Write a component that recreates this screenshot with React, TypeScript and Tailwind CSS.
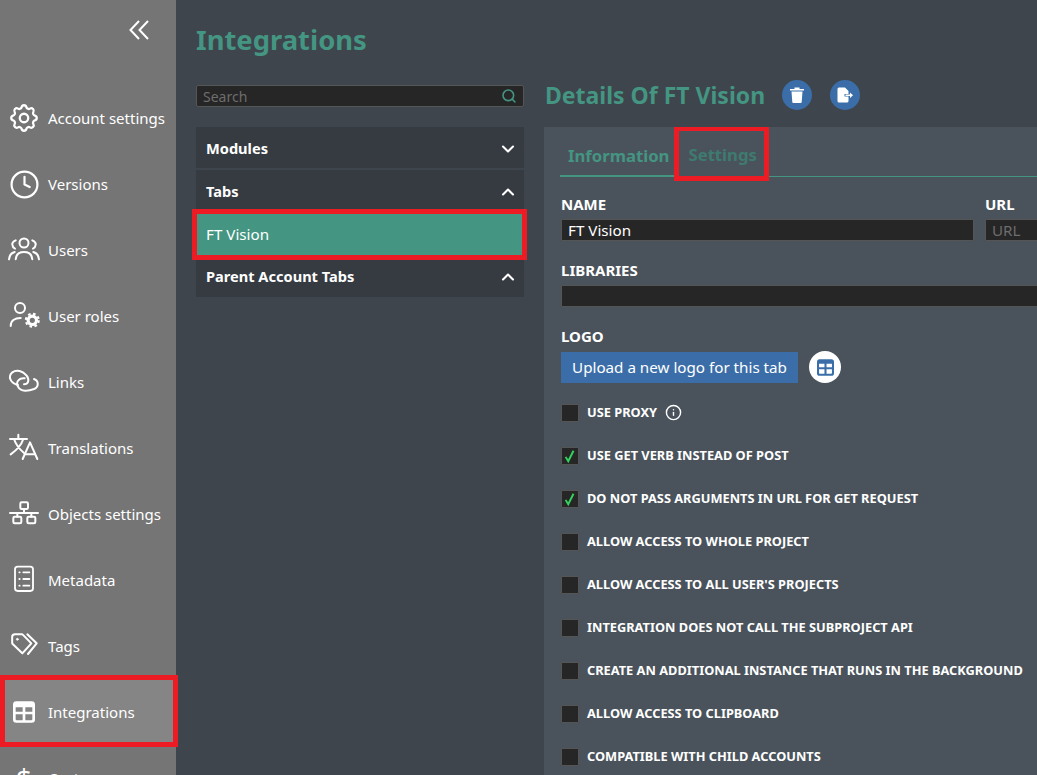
import React from 'react'
import { ChevronDown, ChevronUp, Clock, Info, Search } from 'lucide-react'
import { TbSettings } from 'react-icons/tb'

function Collapse() {
  return (
    <svg viewBox="0 0 20 20" className="w-5 h-5" fill="none" stroke="currentColor" strokeWidth="2">
      <path d="M10 1 1.500 10 10 19M19 1l-8.500 9 8.500 9" />
    </svg>
  )
}

function UsersIcon() {
  return (
    <svg viewBox="0 0 36 36" className="w-9 h-9" fill="none" stroke="currentColor" strokeWidth="2" strokeLinecap="round">
      <circle cx="18" cy="11" r="4.500" />
      <path d="M9.700 8.300C7 9.500 6 11 6.300 12.700 6.500 14.500 7.500 16 9 16.700M26.300 8.300C29 9.500 30 11 29.700 12.700 29.500 14.500 28.500 16 27 16.700" />
      <path d="M9.700 27.300C10 23 13 20 18 20s8 3 8.300 7.300M3 27.300C3.300 24 5 21 8.700 20M33 27.300C32.700 24 31 21 27.300 20" />
    </svg>
  )
}

function UserRolesIcon() {
  return (
    <svg viewBox="0 0 36 36" className="w-9 h-9" fill="none" stroke="currentColor" strokeWidth="2" strokeLinecap="round">
      <circle cx="14" cy="10" r="5" />
      <path d="M4.700 28c0-5 3.800-8 10-8" />
      <circle cx="26.300" cy="22.300" r="4.200" strokeWidth="3.200" />
      <circle cx="26.300" cy="22.300" r="6.500" strokeWidth="2" strokeLinecap="butt" strokeDasharray="2.600 2.500" />
    </svg>
  )
}

function LinksIcon() {
  return (
    <svg viewBox="6 -3 108 108" className="w-9 h-9" fill="none" stroke="currentColor" strokeWidth="6" strokeLinecap="round">
      <path d="M42 60C20 55 10 35 25 22 38 12 56 18 68 32 78 46 72 58 60 58" />
      <path d="M62 40C46 38 34 50 42 65 50 82 75 78 90 72 105 65 105 48 90 42" />
    </svg>
  )
}

function TranslationsIcon() {
  return (
    <svg viewBox="6 195 108 108" className="w-9 h-9" fill="none" stroke="currentColor" strokeWidth="6" strokeLinecap="round" strokeLinejoin="round">
      <path d="M18 222h51M43 209v13M30 222c6 18 18 32 30 42M58 222c-6 18-18 32-38 46" />
      <path d="M56 282 78 232l22 50M63 268h30" />
    </svg>
  )
}

function ObjectsIcon() {
  return (
    <svg viewBox="6 3 108 108" className="w-9 h-9" fill="none" stroke="currentColor" strokeWidth="6" strokeLinecap="round" strokeLinejoin="round">
      <rect x="49" y="22" width="23" height="20" rx="4" />
      <path d="M60 42v12M18 54h84M40 54v11M82 54v11" />
      <rect x="28" y="65" width="24" height="20" rx="4" />
      <rect x="70" y="65" width="24" height="20" rx="4" />
    </svg>
  )
}

function MetadataIcon() {
  return (
    <svg viewBox="6 201 108 108" className="w-9 h-9" fill="none" stroke="currentColor" strokeWidth="5.500" strokeLinecap="round">
      <rect x="33" y="215" width="54" height="73" rx="8" />
      <path d="M46 232h1M58 232h18M46 252h1M58 252h18M46 272h1M58 272h18" />
    </svg>
  )
}

function TagsIcon() {
  return (
    <svg viewBox="6 9 108 108" className="w-9 h-9" fill="none" stroke="currentColor" strokeWidth="6" strokeLinecap="round" strokeLinejoin="round">
      <path d="M33 28h20c2 0 3 .5 4 1.500l25 25.500-27 30-29-28c-1-1-1.500-2-1.500-4V36c0-5 3-8 8.500-8z" />
      <path d="M70 28l28 27-26 32" />
      <circle cx="40" cy="43" r="3" fill="currentColor" strokeWidth="2" />
    </svg>
  )
}

function GridIcon({ className }: { className: string }) {
  return (
    <svg viewBox="0 0 66 65" className={className} fill="currentColor" fillRule="evenodd">
      <path d="M10 0h46a10 10 0 0 1 10 10v45a10 10 0 0 1-10 10H10A10 10 0 0 1 0 55V10A10 10 0 0 1 10 0zM8 18v14h21V18zM37 18v14h21V18zM8 39v15a3 3 0 0 0 3 3h18V39zM37 39v18h18a3 3 0 0 0 3-3V39z" />
    </svg>
  )
}

function DollarIcon() {
  return <span className="text-[28px] leading-none font-normal">$</span>
}

const navItems = [
  { label: 'Account settings', icon: <TbSettings className="w-[34px] h-[34px]" strokeWidth={1.6} /> },
  { label: 'Versions', icon: <Clock className="w-[31px] h-[31px]" strokeWidth={1.7} /> },
  { label: 'Users', icon: <UsersIcon /> },
  { label: 'User roles', icon: <UserRolesIcon /> },
  { label: 'Links', icon: <LinksIcon /> },
  { label: 'Translations', icon: <TranslationsIcon /> },
  { label: 'Objects settings', icon: <ObjectsIcon /> },
  { label: 'Metadata', icon: <MetadataIcon /> },
  { label: 'Tags', icon: <TagsIcon /> },
  { label: 'Integrations', icon: <GridIcon className="w-[22px] h-[22px]" />, active: true },
  { label: 'Costs', icon: <DollarIcon /> },
]

const checks = [
  { label: 'USE PROXY', info: true },
  { label: 'USE GET VERB INSTEAD OF POST', checked: true },
  { label: 'DO NOT PASS ARGUMENTS IN URL FOR GET REQUEST', checked: true },
  { label: 'ALLOW ACCESS TO WHOLE PROJECT' },
  { label: "ALLOW ACCESS TO ALL USER'S PROJECTS" },
  { label: 'INTEGRATION DOES NOT CALL THE SUBPROJECT API' },
  { label: 'CREATE AN ADDITIONAL INSTANCE THAT RUNS IN THE BACKGROUND' },
  { label: 'ALLOW ACCESS TO CLIPBOARD' },
  { label: 'COMPATIBLE WITH CHILD ACCOUNTS' },
]

function Sidebar() {
  return (
    <aside className="w-[176px] shrink-0 bg-[#757575] text-white flex flex-col">
      <div className="h-[85px] shrink-0 flex justify-end items-start pt-[20px] pr-[27px]">
        <Collapse />
      </div>
      {navItems.map((item) => (
        <div key={item.label} className={`relative h-[66px] shrink-0 flex items-center ${item.active ? 'bg-[#858585]' : ''}`}>
          <div className="w-[48px] shrink-0 flex justify-center">{item.icon}</div>
          <span className="text-[15px] whitespace-nowrap">{item.label}</span>
          {item.active && <div className="absolute left-0 top-[-4px] w-[178px] h-[72px] border-[5px] border-[#ed1c24]" />}
        </div>
      ))}
    </aside>
  )
}

function AccordionHead({ title, open, className }: { title: string; open?: boolean; className: string }) {
  return (
    <div className={`flex items-center justify-between pl-[10px] pr-[6px] text-white ${className}`}>
      <span className="text-[14.600px] font-bold">{title}</span>
      {open ? <ChevronUp className="w-5 h-5" strokeWidth={2.5} /> : <ChevronDown className="w-5 h-5" strokeWidth={2.5} />}
    </div>
  )
}

function LeftColumn() {
  return (
    <div className="w-[328px] shrink-0">
      <div className="h-[22px] bg-[#262626] border border-[#555] rounded-[2px] flex items-center justify-between px-[6px]">
        <span className="text-[14px] text-[#6d6d6d]">Search</span>
        <Search className="w-[16px] h-[16px] text-[#449582]" strokeWidth={2.4} />
      </div>
      <div className="mt-[20px] flex flex-col">
        <div className="bg-[#363b42] mb-[2px]">
          <AccordionHead title="Modules" className="h-[41px] pt-[2px]" />
        </div>
        <div className="bg-[#363b42]">
          <AccordionHead title="Tabs" open className="h-[44px] pb-[1px]" />
          <div className="relative h-[41px] bg-[#449582] flex items-center pl-[10px] text-[15.200px] text-white">
            FT Vision
            <div className="absolute left-[-4px] top-[-5px] w-[335px] h-[51px] border-[5px] border-[#ed1c24]" />
          </div>
          <AccordionHead title="Parent Account Tabs" open className="h-[42px] pt-[2px]" />
        </div>
      </div>
    </div>
  )
}

function Field({ label, value, placeholder, className }: { label: string; value?: string; placeholder?: string; className?: string }) {
  return (
    <div className={className}>
      <div className="text-[15px] leading-[20px] font-bold text-white">{label}</div>
      <div className="mt-[5px] h-[22px] bg-[#262626] border border-[#555] rounded-[1px] px-[6px] flex items-center text-[15.200px] whitespace-nowrap">
        {value && <span className="text-white">{value}</span>}
        {placeholder && <span className="text-[#6d6d6d]">{placeholder}</span>}
      </div>
    </div>
  )
}

function CheckRow({ label, checked, info }: { label: string; checked?: boolean; info?: boolean }) {
  return (
    <div className="h-[43px] shrink-0 flex items-center">
      <div className="w-[18px] h-[18px] bg-[#262626] border border-[#555] rounded-[1px] flex items-center justify-center">
        {checked && (
          <svg viewBox="0 0 16 16" className="w-[14px] h-[14px] text-[#33d35e]" fill="none" stroke="currentColor" strokeWidth="2.200">
            <path d="M3 9l3 5 6-12" />
          </svg>
        )}
      </div>
      <span className="ml-[8px] pt-[1px] text-[12.800px] font-bold text-white whitespace-nowrap">{label}</span>
      {info && <Info className="ml-[8px] w-[17px] h-[17px] text-white" strokeWidth={2} />}
    </div>
  )
}

function DetailsPanel() {
  return (
    <div className="flex-1 min-w-0 mt-[-5px]">
      <div className="h-[30px] flex items-center">
        <h2 className="text-[23px] font-bold text-[#449582] whitespace-nowrap ml-[1px]">Details Of FT Vision</h2>
        <div className="ml-[17px] w-[30px] h-[30px] rounded-full bg-[#3b6ea8] flex items-center justify-center">
          <svg viewBox="0 0 16 16" className="w-4 h-4" fill="white">
            <path d="M5.500 0.500h5V2H15v1.500H1V2h4.500zM2.500 4.500h11l-.8 10.500a1 1 0 0 1-1 1H4.300a1 1 0 0 1-1-1z" />
          </svg>
        </div>
        <div className="ml-[18px] w-[30px] h-[30px] rounded-full bg-[#3b6ea8] flex items-center justify-center">
          <svg viewBox="0 0 16 16" className="w-4 h-4" fill="white">
            <path d="M2 .500h6l3.500 3.500v3H7.500v2.500h4V14a1.500 1.500 0 0 1-1.500 1.500H2A1.500 1.500 0 0 1 .5 14V2A1.500 1.500 0 0 1 2 .5z" />
            <path d="M8.500 7.500H13V5.500l3 2.800-3 2.800v-2H8.500z" />
          </svg>
        </div>
      </div>
      <div className="mt-[17px] bg-[#4a535c] h-[700px] pl-[17px] pt-[16px] overflow-hidden">
        <div className="relative flex items-end h-[34px] ml-[-1px] border-b border-[#449582]">
          <div className="h-[34px] px-[8px] border-b-[2px] border-[#449582] mb-[-1px] text-[16.700px] font-bold text-[#449582]">Information</div>
          <div className="h-[34px] pl-[11px] pr-[8px] text-[16.700px] font-bold text-[#3e7b6f]">Settings</div>
          <div className="absolute left-[114px] top-[-17px] w-[95px] h-[55px] border-[5px] border-[#ed1c24]" />
        </div>
        <div className="mt-[17px] flex gap-[11px]">
          <Field label="NAME" value="FT Vision" className="w-[413px] shrink-0" />
          <Field label="URL" placeholder="URL" className="w-[300px] shrink-0" />
        </div>
        <Field label="LIBRARIES" className="mt-[19px] w-[700px]" />
        <div className="mt-[19px] text-[15px] leading-[20px] font-bold text-white">LOGO</div>
        <div className="mt-[5px] flex items-center">
          <div className="w-[237px] h-[31px] bg-[#3b6ea8] flex items-center justify-center text-[15.200px] text-white">Upload a new logo for this tab</div>
          <div className="ml-[11px] w-[32px] h-[32px] rounded-full bg-white flex items-center justify-center">
            <GridIcon className="w-[17px] h-[17px] text-[#3b6ea8]" />
          </div>
        </div>
        <div className="mt-[8px] flex flex-col">
          {checks.map((c) => (
            <CheckRow key={c.label} {...c} />
          ))}
        </div>
      </div>
    </div>
  )
}

export default function App() {
  return (
    <div className="w-[1037px] h-[775px] overflow-hidden flex bg-[#3e454d] font-['Noto_Sans',sans-serif]">
      <Sidebar />
      <main className="flex-1 min-w-0 pl-[20px] pt-[19px] overflow-hidden">
        <h1 className="h-[42px] text-[27.400px] leading-[42px] font-bold text-[#449582]">Integrations</h1>
        <div className="mt-[24px] flex gap-[20px]">
          <LeftColumn />
          <DetailsPanel />
        </div>
      </main>
    </div>
  )
}
